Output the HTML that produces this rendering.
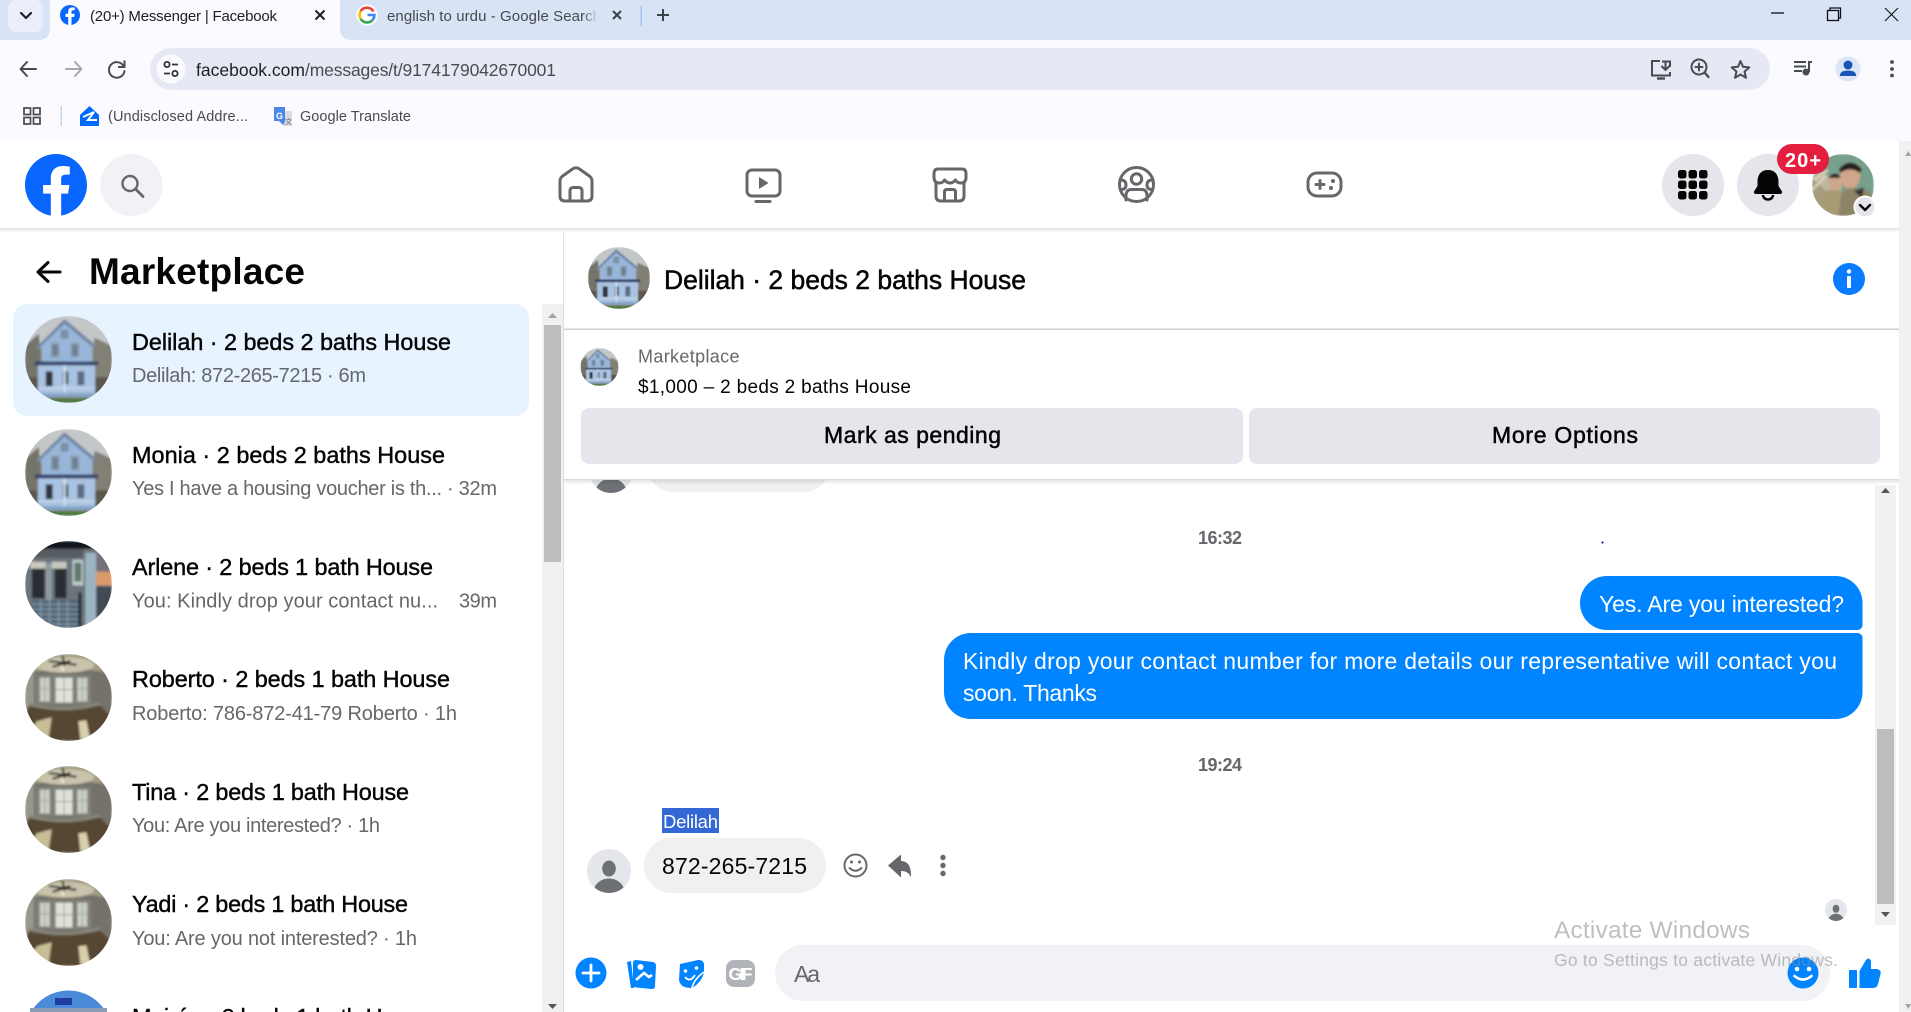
<!DOCTYPE html>
<html lang="en">
<head>
<meta charset="utf-8">
<title>Messenger | Facebook</title>
<style>
html,body{margin:0;padding:0;background:#fff;width:1911px;height:1012px;overflow:hidden}
svg{display:block}
text{font-family:"Liberation Sans",Arial,sans-serif;white-space:pre}
.t{fill:#050505;stroke:#050505;stroke-width:.42px}
.s{fill:#65676b}
.g{fill:none;stroke:#65676b;stroke-width:3;stroke-linecap:round;stroke-linejoin:round}
.c{fill:none;stroke:#474c53;stroke-width:2;stroke-linecap:round;stroke-linejoin:round}
</style>
</head>
<body>
<svg xmlns="http://www.w3.org/2000/svg" width="1911" height="1012" viewBox="0 0 1911 1012">
<defs>
<clipPath id="cc"><circle cx="44" cy="44" r="44"/></clipPath>
<clipPath id="cp"><circle cx="31" cy="31" r="31"/></clipPath>
<clipPath id="cu"><circle cx="22" cy="22" r="22"/></clipPath>
<filter id="b" x="-5%" y="-5%" width="110%" height="110%"><feGaussianBlur stdDeviation="1"/></filter>
<linearGradient id="sh" x1="0" y1="0" x2="0" y2="1"><stop offset="0" stop-color="#000" stop-opacity=".1"/><stop offset="1" stop-color="#000" stop-opacity="0"/></linearGradient>
<linearGradient id="fade" x1="0" y1="0" x2="1" y2="0"><stop offset="0" stop-color="#d8e4f6" stop-opacity="0"/><stop offset="1" stop-color="#d8e4f6"/></linearGradient>

<symbol id="house" viewBox="0 0 88 88">
<g clip-path="url(#cc)"><g filter="url(#b)">
<rect width="88" height="88" fill="#8f8e86"/>
<rect width="88" height="30" fill="#c4c7c8"/>
<path d="M0 30 L14 18 L18 70 L0 70Z" fill="#74736a"/>
<path d="M70 22 L88 30 V75 H68Z" fill="#827f74"/>
<rect y="62" x="0" width="16" height="26" fill="#5c574e"/>
<rect y="62" x="68" width="20" height="26" fill="#5c574e"/>
<path d="M40 3 L72 30 L68 32 V48 H17 V32 L11 32Z" fill="#98b6da"/>
<path d="M11 32 L40 3 L72 30 L69 32 L40 8 L14 33Z" fill="#7488a4"/>
<rect x="36" y="14" width="8" height="9" fill="#7d90a4"/>
<rect x="26" y="27" width="9" height="15" fill="#8b9dae"/>
<rect x="28" y="29" width="5" height="11" fill="#6b7f92"/>
<rect x="46" y="27" width="9" height="15" fill="#8b9dae"/>
<rect x="48" y="29" width="5" height="11" fill="#6b7f92"/>
<rect x="10" y="46" width="64" height="4" fill="#34456a"/>
<rect x="13" y="50" width="58" height="30" fill="#a9c3e2"/>
<rect x="21" y="56" width="7" height="15" fill="#30363e"/>
<rect x="38" y="56" width="6" height="13" fill="#4e6072"/>
<rect x="53" y="56" width="7" height="14" fill="#5b6e82"/>
<rect x="39" y="50" width="2" height="29" fill="#d5e1ef"/>
<rect x="13" y="72" width="58" height="2" fill="#c6d6e9"/>
<rect x="12" y="78" width="60" height="4" fill="#86a4c8"/>
<rect x="24" y="83" width="40" height="5" fill="#4f7a3d"/>
</g></g>
</symbol>

<symbol id="porch" viewBox="0 0 88 88">
<g clip-path="url(#cc)"><g filter="url(#b)">
<rect width="88" height="88" fill="#6a747c"/>
<rect width="88" height="8" fill="#10141a"/>
<path d="M0 8 H60 L57 17 H0Z" fill="#565c60"/>
<rect x="5" y="21" width="16" height="7" fill="#c9c8c0"/>
<rect x="27" y="21" width="15" height="7" fill="#c9c8c0"/>
<rect x="7" y="28" width="13" height="30" fill="#2a2d31"/>
<rect x="30" y="28" width="12" height="30" fill="#2a2d31"/>
<rect x="21" y="22" width="6" height="38" fill="#8c9ba2"/>
<rect x="48" y="19" width="11" height="26" fill="#bcc8ca"/>
<rect x="50" y="22" width="7" height="19" fill="#5f7870"/>
<rect x="61" y="12" width="11" height="78" fill="#9cb4c0"/>
<rect x="73" y="14" width="15" height="30" fill="#75707a"/>
<rect x="72" y="31" width="16" height="14" fill="#dc9a6a"/>
<rect x="72" y="46" width="16" height="44" fill="#414c56"/>
<rect x="8" y="60" width="46" height="28" fill="#4f6274"/>
<path d="M8 64 H54 M8 69 H54 M8 74 H54 M8 79 H54 M8 84 H54 M16 60 V88 M25 60 V88 M34 60 V88 M43 60 V88" stroke="#8398aa" stroke-width="1.400" fill="none"/>
<rect x="54" y="52" width="3" height="36" fill="#1f262c"/>
</g></g>
</symbol>

<symbol id="room" viewBox="0 0 88 88">
<g clip-path="url(#cc)"><g filter="url(#b)">
<rect width="88" height="88" fill="#75726a"/>
<path d="M0 0 H88 V20 Q44 10 0 20Z" fill="#a29c84"/>
<ellipse cx="40" cy="11" rx="30" ry="8" fill="#c8c3ab"/>
<rect x="11" y="21" width="56" height="30" fill="#7f8177"/>
<rect x="0" y="18" width="9" height="50" fill="#98988a"/>
<rect x="15" y="24" width="10" height="24" fill="#ccd0c8"/>
<rect x="31" y="24" width="17" height="25" fill="#dfe2da"/>
<rect x="53" y="24" width="10" height="24" fill="#ccd0c8"/>
<path d="M20 24 V48 M39.500 24 V49 M58 24 V48 M15 35 H25 M31 36 H48 M53 35 H63" stroke="#a0a398" stroke-width="1" fill="none"/>
<path d="M4 52 Q40 62 76 52 L88 64 V88 H0 V62Z" fill="#574631"/>
<path d="M4 51 Q40 60 76 50" stroke="#85857a" stroke-width="3" fill="none"/>
<path d="M12 68 L27 64 L24 85 H4 V80Z" fill="#c7bd96"/>
<path d="M54 68 L62 67 L66 86 H56Z" fill="#d8cfad"/>
<path d="M24 7 L52 11 M38 2 L40 12 M28 13 L46 7" stroke="#15130f" stroke-width="2" fill="none"/>
<circle cx="38" cy="15" r="2" fill="#e8e6c8"/>
</g></g>
</symbol>

<symbol id="me" viewBox="0 0 62 62">
<g clip-path="url(#cp)"><g filter="url(#b)">
<rect width="62" height="62" fill="#78a08c"/>
<path d="M0 10 L30 32 L24 62 H0Z" fill="#bdb7a0"/>
<path d="M0 24 L22 44 L18 62 H0Z" fill="#a99c7a"/>
<path d="M2 26 L16 16 M0 36 L14 22" stroke="#dcd8bf" stroke-width="2"/>
<path d="M14 38 Q20 32 30 38 L34 62 H10Z" fill="#a89a72"/>
<ellipse cx="23" cy="29" rx="6.500" ry="8" fill="#cda68c"/>
<path d="M16 24 Q23 15 30 24Z" fill="#2a2420"/>
<path d="M30 38 Q42 30 58 38 L62 62 H26Z" fill="#8d8467"/>
<ellipse cx="38" cy="22" rx="10" ry="12.500" fill="#d2a68a"/>
<path d="M27 15 Q38 2 50 15 L48 19 Q38 12 28 19Z" fill="#26201c"/>
<path d="M42 37 L52 33 L50 44Z" fill="#3a3532"/>
</g></g>
</symbol>

<symbol id="user" viewBox="0 0 44 44">
<g clip-path="url(#cu)">
<rect width="44" height="44" fill="#e4e6eb"/>
<ellipse cx="22" cy="19.500" rx="6.800" ry="8" fill="#6d7075"/>
<ellipse cx="22" cy="43" rx="15.500" ry="13.500" fill="#6d7075"/>
</g>
</symbol>
</defs>

<!-- page base -->
<rect width="1911" height="1012" fill="#fff"/>

<!-- browser chrome -->
<rect width="1911" height="40" fill="#d8e4f6"/>
<rect y="40" width="1911" height="101" fill="#fafaff"/>
<rect x="8" y="0" width="35" height="32" rx="8" fill="#e9eefa"/>
<path d="M21 13 L26 18 L31 13" fill="none" stroke="#1f1f1f" stroke-width="2.200" stroke-linecap="round" stroke-linejoin="round"/>

<path d="M38 40 Q50 40 50 28 V0 H340 V28 Q340 40 352 40Z" fill="#fafaff"/>
<circle cx="70" cy="15" r="10" fill="#0866ff"/>
<path d="M71.500 25 V17 H74.200 L74.700 13.800 H71.500 V12 C71.500 11 72 10.300 73.300 10.300 H74.800 V7.600 C74 7.500 73.200 7.400 72.500 7.400 C69.900 7.400 68.200 8.900 68.200 11.500 V13.800 H65.500 V17 H68.200 V25Z" fill="#fff"/>
<text x="90" y="21" font-size="15" fill="#1f1f1f" textLength="187">(20+) Messenger | Facebook</text>
<path d="M315.500 10.500 L324.500 19.500 M324.500 10.500 L315.500 19.500" stroke="#1f1f1f" stroke-width="2" fill="none"/>

<circle cx="367" cy="15" r="10.500" fill="#fff"/>
<path d="M373.500 11.500 A7.500 7.500 0 0 0 360.600 11.200" fill="none" stroke="#ea4335" stroke-width="2.600"/>
<path d="M360.600 11.200 A7.500 7.500 0 0 0 360.600 18.800" fill="none" stroke="#fbbc05" stroke-width="2.600"/>
<path d="M360.600 18.800 A7.500 7.500 0 0 0 372.600 20" fill="none" stroke="#34a853" stroke-width="2.600"/>
<path d="M372.600 20 A7.500 7.500 0 0 0 374.400 15 H367.500" fill="none" stroke="#4285f4" stroke-width="2.600"/>
<text x="387" y="21" font-size="15" fill="#45484e" textLength="214">english to urdu - Google Search</text>
<rect x="582" y="0" width="16" height="40" fill="url(#fade)"/>
<rect x="598" y="0" width="12" height="40" fill="#d8e4f6"/>
<path d="M613 11 L621 19 M621 11 L613 19" stroke="#3d4147" stroke-width="2" fill="none"/>
<rect x="640.500" y="6" width="1.500" height="20" fill="#a9c3ef"/>
<path d="M657 15 H669 M663 9 V21" stroke="#3d4147" stroke-width="2" fill="none"/>

<path d="M1771 13 H1784" stroke="#111" stroke-width="1.300"/>
<rect x="1827.500" y="10.500" width="11" height="10" fill="none" stroke="#111" stroke-width="1.300"/>
<path d="M1830 10 V8 H1840.500 V18 H1838.500" fill="none" stroke="#111" stroke-width="1.300"/>
<path d="M1885 8 L1898 21 M1898 8 L1885 21" stroke="#111" stroke-width="1.100" fill="none"/>

<path d="M36 69 H21 M27 62 L20.500 69 L27 76" class="c"/>
<path d="M66 69 H81 M75 62 L81.500 69 L75 76" class="c" style="stroke:#a4a7ad"/>
<path d="M123.500 66 A7.800 7.800 0 1 0 124.500 71" class="c"/>
<path d="M124.500 60.500 V67 H118" fill="none" stroke="#474c53" stroke-width="2"/>

<rect x="150" y="48" width="1620" height="42" rx="21" fill="#e6e9f3"/>
<circle cx="171" cy="69" r="14.500" fill="#fafaff"/>
<circle cx="167" cy="64.500" r="2.600" fill="none" stroke="#2f3237" stroke-width="1.800"/>
<path d="M172 64.500 H178 M164 73.500 H170" stroke="#2f3237" stroke-width="1.800"/>
<circle cx="175" cy="73.500" r="2.600" fill="none" stroke="#2f3237" stroke-width="1.800"/>
<text x="196" y="76" font-size="17.500" fill="#1f1f1f" textLength="109">facebook.com</text>
<text x="305" y="76" font-size="17.500" fill="#474c53" textLength="251">/messages/t/9174179042670001</text>

<path d="M1670 67 V61.500 H1662 M1660 61 H1652 V75.500 H1670 V72" fill="none" stroke="#474c53" stroke-width="2"/>
<path d="M1657 78.500 H1665" stroke="#474c53" stroke-width="2.400"/>
<path d="M1665.500 61 V69.500 M1661.500 66 L1665.500 70 L1669.500 66" fill="none" stroke="#474c53" stroke-width="2"/>
<circle cx="1699" cy="67" r="7.500" class="c"/>
<path d="M1699 63.500 V70.500 M1695.500 67 H1702.500" class="c"/>
<path d="M1704.500 72.500 L1708.500 77" class="c" style="stroke-width:2.400"/>
<path d="M1740.500 61 L1743 66.800 L1749.300 67.400 L1744.500 71.600 L1746 77.800 L1740.500 74.500 L1735 77.800 L1736.500 71.600 L1731.700 67.400 L1738 66.800Z" class="c"/>
<path d="M1794 62 H1806 M1794 66.500 H1806 M1794 71 H1802" stroke="#474c53" stroke-width="2"/>
<circle cx="1806" cy="72" r="3.500" fill="#474c53"/>
<path d="M1809 72 V62 H1812" stroke="#474c53" stroke-width="2" fill="none"/>
<circle cx="1848" cy="69" r="12.500" fill="#dde6f7"/>
<circle cx="1848" cy="65" r="4.500" fill="#1a56b8"/>
<path d="M1840 75.500 Q1840 70.500 1848 70.500 Q1856 70.500 1856 75.500 V76 H1840Z" fill="#1a56b8"/>
<circle cx="1892" cy="62" r="1.900" fill="#474c53"/>
<circle cx="1892" cy="69" r="1.900" fill="#474c53"/>
<circle cx="1892" cy="75.500" r="1.900" fill="#474c53"/>

<!-- bookmarks -->
<path d="M24 108 H30.500 V114.500 H24Z M33.500 108 H40 V114.500 H33.500Z M24 117.500 H30.500 V124 H24Z M33.500 117.500 H40 V124 H33.500Z" fill="none" stroke="#474c53" stroke-width="1.700"/>
<rect x="60.500" y="106" width="1.500" height="20" fill="#c7d6ef"/>
<path d="M80 115 L89.500 106 L99 115 V126 H80Z" fill="#006aff"/>
<path d="M83 117 L94 112 L88 120 H97" fill="none" stroke="#fff" stroke-width="2"/>
<text x="108" y="121" font-size="14.500" fill="#474c53" textLength="140">(Undisclosed Addre...</text>
<rect x="283" y="111" width="9" height="15" fill="#d8dbe0"/>
<path d="M274 107 H285 V122 L283 125 L279 121 H274Z" fill="#4a87e8"/>
<text x="276" y="119" font-size="9" font-weight="bold" fill="#fff">G</text>
<text x="285" y="124" font-size="7" fill="#5f6368" style="font-family:'Liberation Sans','Noto Sans CJK SC',sans-serif">文</text>
<text x="300" y="121" font-size="14.500" fill="#474c53" textLength="111">Google Translate</text>

<!-- fb header -->
<rect y="141" width="1899" height="87" fill="#fff"/>
<rect y="228" width="1899" height="5" fill="url(#sh)"/>
<rect x="1899" y="141" width="12" height="871" fill="#f1f1f1"/>
<path d="M1905 156 L1908.500 151 L1911 156Z" fill="#a3a3a3"/>
<path d="M1905 1004 L1908.500 1009 L1911 1004Z" fill="#a3a3a3"/>

<g transform="translate(25 154) scale(1.7222)">
<path d="M15 35.800C6.500 34.300 0 26.900 0 18 0 8.100 8.100 0 18 0s18 8.100 18 18c0 8.900-6.500 16.300-15 17.800l-1-.8h-4l-1 .8z" fill="#0866ff"/>
<path d="M25 23l.8-5H21v-3.500c0-1.400.5-2.500 2.700-2.500H26V7.400c-1.300-.2-2.700-.4-4-.4-4.100 0-7 2.500-7 7v4h-4.500v5H15v12.700c1 .2 2 .3 3 .3s2-.1 3-.3V23h4z" fill="#fff"/>
</g>
<circle cx="131.500" cy="185" r="31" fill="#f0f2f5"/>
<circle cx="130" cy="183.500" r="7.500" fill="none" stroke="#65676b" stroke-width="2.400"/>
<path d="M135.500 189 L143 196.500" stroke="#65676b" stroke-width="2.800" stroke-linecap="round"/>

<path class="g" d="M560 181 Q560 178.500 562 176.500 L572.500 169 Q576 166.500 579.500 169 L590 176.500 Q592 178.500 592 181 V196 Q592 201 587 201 H565 Q560 201 560 196Z"/>
<path class="g" d="M570 200 V191 Q570 187.500 573.500 187.500 H578.500 Q582 187.500 582 191 V200"/>

<rect class="g" x="747" y="170" width="33" height="26" rx="5"/>
<path class="g" d="M756 201.500 H770"/>
<path d="M759 177 L768.500 183 L759 189Z" fill="#65676b"/>

<path class="g" d="M938 169 H962 Q966 169 966 174 V177 Q966 183 961 183 Q957 183 955.500 180 Q953 183 950 183 Q947 183 944.500 180 Q943 183 939 183 Q934 183 934 177 V174 Q934 169 938 169Z"/>
<path class="g" d="M936 183 V196 Q936 201 941 201 H959 Q964 201 964 196 V183"/>
<path class="g" d="M944.500 200 V192 Q944.500 189.500 947 189.500 H953 Q955.500 189.500 955.500 192 V200"/>

<circle class="g" cx="1136.500" cy="184.500" r="17"/>
<circle class="g" cx="1136.500" cy="179" r="5.200"/>
<path class="g" d="M1126 200 Q1125 189.500 1131 189.500 H1142 Q1148 189.500 1147 200"/>
<path class="g" d="M1120.500 180 Q1126 180 1126 185 Q1126 189.500 1121 189.500 M1152.500 180 Q1147 180 1147 185 Q1147 189.500 1152 189.500"/>

<rect class="g" x="1308" y="173" width="33" height="23" rx="9"/>
<path class="g" d="M1316 184.500 H1324 M1320 180.500 V188.500"/>
<circle cx="1333" cy="181" r="2" fill="#65676b"/>
<circle cx="1331" cy="188" r="2" fill="#65676b"/>

<circle cx="1693" cy="185" r="31" fill="#e4e6eb"/>
<g fill="#050505">
<rect x="1678" y="170" width="8.500" height="8.500" rx="2.500"/><rect x="1688.500" y="170" width="8.500" height="8.500" rx="2.500"/><rect x="1699" y="170" width="8.500" height="8.500" rx="2.500"/>
<rect x="1678" y="180.500" width="8.500" height="8.500" rx="2.500"/><rect x="1688.500" y="180.500" width="8.500" height="8.500" rx="2.500"/><rect x="1699" y="180.500" width="8.500" height="8.500" rx="2.500"/>
<rect x="1678" y="191" width="8.500" height="8.500" rx="2.500"/><rect x="1688.500" y="191" width="8.500" height="8.500" rx="2.500"/><rect x="1699" y="191" width="8.500" height="8.500" rx="2.500"/>
</g>
<circle cx="1768" cy="185" r="31" fill="#e4e6eb"/>
<path d="M1768 170 C1760 170 1757.500 176 1757.500 182 V186 L1754 191.500 Q1753.500 194 1756 194 H1780 Q1782.500 194 1782 191.500 L1778.500 186 V182 C1778.500 176 1776 170 1768 170Z" fill="#050505"/>
<path d="M1763 195 A5 4.500 0 0 0 1773 195" fill="none" stroke="#050505" stroke-width="2.400"/>

<use href="#me" x="1812" y="154" width="62" height="62"/>
<circle cx="1865" cy="207" r="11.500" fill="#fff"/>
<circle cx="1865" cy="207" r="9.500" fill="#e4e6eb"/>
<path d="M1860 205 L1865 210 L1870 205" fill="none" stroke="#050505" stroke-width="2.400" stroke-linecap="round" stroke-linejoin="round"/>

<rect x="1777" y="144" width="52" height="30" rx="15" fill="#e41e3f"/>
<text x="1785" y="167" font-size="20" font-weight="bold" fill="#fff" textLength="36">20+</text>

<!-- sidebar -->
<rect x="563" y="233" width="1" height="779" fill="#dddfe2"/>
<path d="M60 272 H38 M48 262.500 L38 272 L48 281.500" fill="none" stroke="#050505" stroke-width="3" stroke-linecap="round" stroke-linejoin="round"/>
<text x="89" y="284" font-size="37" font-weight="bold" fill="#050505" textLength="216">Marketplace</text>

<rect x="13" y="304" width="516" height="112" rx="14" fill="#e7f3ff"/>
<rect x="542" y="304" width="21" height="708" fill="#f1f1f1"/>
<rect x="544" y="325" width="17" height="237" fill="#bdbdbd"/>
<path d="M548 318 L552.500 313 L557 318Z" fill="#a3a3a3"/>
<path d="M548 1004 L552.500 1009 L557 1004Z" fill="#555"/>

<use href="#house" x="25" y="316" width="87" height="87"/>
<text class="t" x="132" y="350" font-size="23.400" textLength="319">Delilah · 2 beds 2 baths House</text>
<text class="s" x="132" y="382" font-size="20" textLength="234">Delilah: 872-265-7215 · 6m</text>

<use href="#house" x="25" y="429" width="87" height="87"/>
<text class="t" x="132" y="463" font-size="23.400" textLength="313">Monia · 2 beds 2 baths House</text>
<text class="s" x="132" y="495" font-size="20" textLength="365">Yes I have a housing voucher is th... · 32m</text>

<use href="#porch" x="25" y="541" width="87" height="87"/>
<text class="t" x="132" y="575" font-size="23.400" textLength="301">Arlene · 2 beds 1 bath House</text>
<text class="s" x="132" y="607.500" font-size="20" textLength="306">You: Kindly drop your contact nu...</text>
<text class="s" x="459" y="607.500" font-size="20" textLength="38">39m</text>

<use href="#room" x="25" y="654" width="87" height="87"/>
<text class="t" x="132" y="687" font-size="23.400" textLength="318">Roberto · 2 beds 1 bath House</text>
<text class="s" x="132" y="720" font-size="20" textLength="325">Roberto: 786-872-41-79 Roberto · 1h</text>

<use href="#room" x="25" y="766" width="87" height="87"/>
<text class="t" x="132" y="800" font-size="23.400" textLength="277">Tina · 2 beds 1 bath House</text>
<text class="s" x="132" y="832" font-size="20" textLength="248">You: Are you interested? · 1h</text>

<use href="#room" x="25" y="879" width="87" height="87"/>
<text class="t" x="132" y="912" font-size="23.400" textLength="276">Yadi · 2 beds 1 bath House</text>
<text class="s" x="132" y="945" font-size="20" textLength="285">You: Are you not interested? · 1h</text>

<path d="M31 1012 A43.500 43.500 0 0 1 106 1012Z" fill="#4a8ad6"/>
<rect x="55" y="998" width="17" height="7" fill="#1d3e9e"/>
<rect x="30" y="1008" width="77" height="4" fill="#8a9cb4"/>
<text class="t" x="132" y="1025" font-size="23.400" textLength="300">Mairón · 2 beds 1 bath House</text>

<!-- conversation -->
<use href="#user" x="589" y="449" width="44" height="44"/>
<rect x="647" y="440" width="183" height="52" rx="26" fill="#f0f0f0"/>

<rect x="564" y="233" width="1335" height="96" fill="#fff"/>
<use href="#house" x="588" y="247" width="62" height="62"/>
<text class="t" x="664" y="289" font-size="26.500" textLength="362" style="stroke-width:.5px">Delilah · 2 beds 2 baths House</text>
<circle cx="1849" cy="279" r="16" fill="#0a7cff"/>
<circle cx="1849" cy="271.500" r="2.200" fill="#fff"/>
<rect x="1847" y="276" width="4" height="12" rx="1" fill="#fff"/>

<rect x="564" y="329" width="1335" height="150" fill="#fff"/>
<rect x="564" y="328.500" width="1335" height="1.500" fill="#ced0d4"/>
<rect x="564" y="479" width="1335" height="1" fill="#d8dadf"/>
<rect x="564" y="480" width="1335" height="5" fill="url(#sh)"/>
<use href="#house" x="580.500" y="348" width="38" height="38"/>
<text class="s" x="638" y="362.500" font-size="18" textLength="101.500">Marketplace</text>
<text x="638" y="393" font-size="19" fill="#050505" textLength="273">$1,000 – 2 beds 2 baths House</text>
<rect x="581" y="408" width="662" height="56" rx="8" fill="#e4e6eb"/>
<rect x="1249" y="408" width="631" height="56" rx="8" fill="#e4e6eb"/>
<text class="t" x="824" y="443" font-size="23" textLength="177" style="stroke-width:.5px">Mark as pending</text>
<text class="t" x="1492" y="443" font-size="23" textLength="146" style="stroke-width:.5px">More Options</text>

<text x="1198" y="544" font-size="18" font-weight="bold" fill="#65676b" textLength="44">16:32</text>
<circle cx="1602.500" cy="542.500" r="1.100" fill="#1a1aa8"/>

<path d="M1607 576 H1835.500 A27 27 0 0 1 1862.500 603 V625 A5 5 0 0 1 1857.500 630 H1607 A27 27 0 0 1 1580 603 A27 27 0 0 1 1607 576Z" fill="#0084ff"/>
<text x="1599" y="612" font-size="23" fill="#fff" textLength="245">Yes. Are you interested?</text>
<path d="M971 633 H1857.500 A5 5 0 0 1 1862.500 638 V692 A27 27 0 0 1 1835.500 719 H971 A27 27 0 0 1 944 692 V660 A27 27 0 0 1 971 633Z" fill="#0084ff"/>
<text x="963" y="669" font-size="23" fill="#fff" textLength="874">Kindly drop your contact number for more details our representative will contact you</text>
<text x="963" y="701" font-size="23" fill="#fff" textLength="134">soon. Thanks</text>

<text x="1198" y="771" font-size="18" font-weight="bold" fill="#65676b" textLength="44">19:24</text>

<rect x="662" y="808" width="57" height="25" fill="#3367d6"/>
<text x="663" y="828" font-size="18.500" fill="#fff" textLength="55">Delilah</text>
<use href="#user" x="587" y="849" width="44" height="44"/>
<rect x="644" y="838" width="182" height="55" rx="27.500" fill="#f0f0f0"/>
<text x="662" y="874" font-size="23" fill="#050505" textLength="145">872-265-7215</text>

<circle cx="855.500" cy="865.500" r="11" fill="none" stroke="#65676b" stroke-width="2"/>
<circle cx="851.500" cy="862" r="1.500" fill="#65676b"/>
<circle cx="859.500" cy="862" r="1.500" fill="#65676b"/>
<path d="M849.500 868 Q855.500 873.500 861.500 868" fill="none" stroke="#65676b" stroke-width="2" stroke-linecap="round"/>
<path d="M888 865.500 L901 854.500 V861 C907.500 861 911.500 866 911 877 C908.500 872.500 906 871 901 871 V877.500Z" fill="#65676b"/>
<circle cx="943" cy="857.500" r="2.700" fill="#65676b"/>
<circle cx="943" cy="865.500" r="2.700" fill="#65676b"/>
<circle cx="943" cy="873.500" r="2.700" fill="#65676b"/>

<use href="#user" x="1825" y="899" width="22" height="22"/>

<rect x="1875" y="485" width="21" height="440" fill="#f1f1f1"/>
<rect x="1877" y="729" width="17" height="175" fill="#bdbdbd"/>
<path d="M1881 493 L1885.500 488 L1890 493Z" fill="#555"/>
<path d="M1881 912 L1885.500 917 L1890 912Z" fill="#555"/>

<!-- composer -->
<circle cx="591" cy="973" r="15.500" fill="#0084ff"/>
<path d="M591 965 V981 M583 973 H599" stroke="#fff" stroke-width="2.800" stroke-linecap="round"/>
<path d="M631 961 L627 962 L631 988 L634 988Z" fill="#0084ff"/>
<path d="M636 960 L653 962 Q656 962.500 656 966 L655 986 Q655 989 652 989 L636 987.500 Q633 987 633 984 L633 963 Q633 960 636 960Z" fill="#0084ff"/>
<circle cx="640.500" cy="967" r="3" fill="#fff"/>
<path d="M636 980 L644 973 L649 977 L652 975" fill="none" stroke="#fff" stroke-width="2.600"/>
<path d="M680 964 L698 960 Q703 959.500 704 964 L704 972 Q702 982 692 988 L686 987.500 Q680 986 679 980Z" fill="#0084ff"/>
<circle cx="685.500" cy="971" r="1.800" fill="#fff"/>
<circle cx="696.500" cy="968" r="1.800" fill="#fff"/>
<path d="M685 977 Q690 983 695 975" fill="none" stroke="#fff" stroke-width="1.800"/>
<path d="M692 988 Q694 979 704 972" fill="none" stroke="#fff" stroke-width="1.600"/>
<rect x="726" y="960" width="29" height="27" rx="8" fill="#b0b3b8"/>
<text x="728.500" y="980" font-size="17.500" font-weight="bold" fill="#fff" textLength="24">GIF</text>

<rect x="775" y="945" width="1055" height="56" rx="28" fill="#f0f2f5"/>
<text class="s" x="794" y="982" font-size="23" textLength="26">Aa</text>

<circle cx="1803" cy="973" r="15.500" fill="#0084ff"/>
<circle cx="1797" cy="969" r="2.300" fill="#fff"/>
<circle cx="1809" cy="969" r="2.300" fill="#fff"/>
<path d="M1794.500 976 Q1803 983 1811.500 976" fill="none" stroke="#fff" stroke-width="2.600" stroke-linecap="round"/>
<rect x="1849" y="970" width="8" height="18" rx="1" fill="#0084ff"/>
<path d="M1859.500 971 L1866 960 Q1869 956.500 1871 961 L1871 969 H1877 Q1881.500 970 1880.500 974 L1878 984 Q1877 988 1873 988 H1859.500Z" fill="#0084ff"/>

<!-- watermark -->
<text x="1554" y="938" font-size="24.500" fill="#8a8a8a" fill-opacity=".55" textLength="196">Activate Windows</text>
<text x="1554" y="966" font-size="17.500" fill="#8a8a8a" fill-opacity=".55" textLength="284">Go to Settings to activate Windows.</text>
</svg>
</body>
</html>
